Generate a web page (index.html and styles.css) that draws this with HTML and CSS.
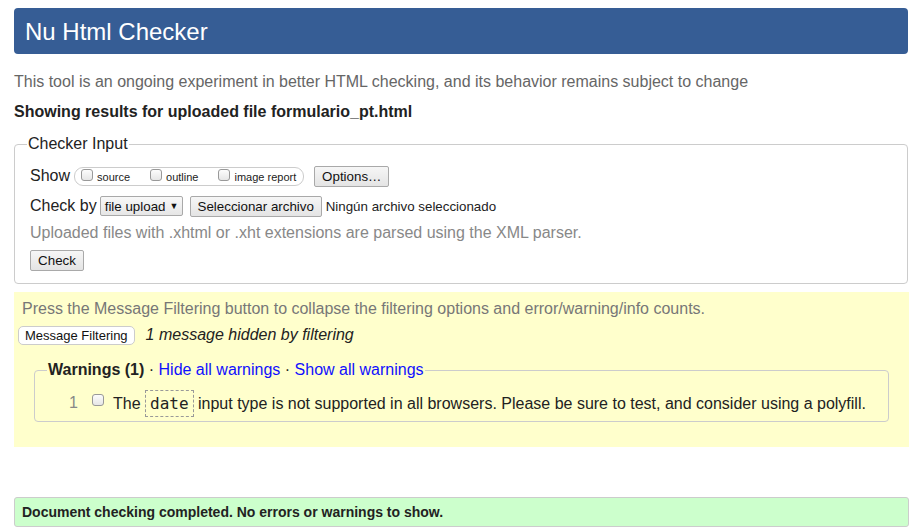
FILE: index.html
```html
<!DOCTYPE html>
<html lang="en">
<head>
<meta charset="utf-8">
<title>Nu Html Checker</title>
<link rel="stylesheet" href="styles.css">
</head>
<body>
<h1 class="title">Nu Html Checker</h1>
<p class="intro">This tool is an ongoing experiment in better HTML checking, and its behavior remains subject to change</p>
<p class="showing">Showing results for uploaded file formulario_pt.html</p>

<fieldset class="input-box">
  <legend>Checker Input</legend>
  <div class="row row-show">
    <span class="lbl">Show</span>
    <span class="pill">
      <label class="opt"><span class="cb"></span>source</label>
      <label class="opt"><span class="cb"></span>outline</label>
      <label class="opt"><span class="cb"></span>image report</label>
    </span>
    <span class="btn btn-options">Options…</span>
  </div>
  <div class="row row-checkby">
    <span class="lbl">Check by</span>
    <span class="select">file upload <span class="arrow">▼</span></span>
    <span class="btn btn-file">Seleccionar archivo</span>
    <span class="nofile">Ningún archivo seleccionado</span>
  </div>
  <p class="hint">Uploaded files with .xhtml or .xht extensions are parsed using the XML parser.</p>
  <div class="row row-check">
    <span class="btn btn-check">Check</span>
  </div>
</fieldset>

<section class="filter">
  <p class="filter-note">Press the Message Filtering button to collapse the filtering options and error/warning/info counts.</p>
  <div class="filter-row">
    <span class="btn-filter">Message Filtering</span>
    <em class="hidden-note">1 message hidden by filtering</em>
  </div>
  <fieldset class="warnings">
    <legend><strong>Warnings (1)</strong> · <a href="#">Hide all warnings</a> · <a href="#">Show all warnings</a></legend>
    <div class="msg">
      <span class="num">1</span>
      <span class="cb cb-msg"></span>
      <span class="msg-text">The <code>date</code> input type is not supported in all browsers. Please be sure to test, and consider using a polyfill.</span>
    </div>
  </fieldset>
</section>

<p class="done">Document checking completed. No errors or warnings to show.</p>
</body>
</html>
```

FILE: styles.css
```css
html, body {
  margin: 0;
  padding: 0;
  background: #fff;
}
body {
  padding: 8px 15px 0 14px;
  font-family: "Liberation Sans", Arial, sans-serif;
  font-size: 16px;
  color: #222;
}
.title {
  margin: 0;
  height: 46px;
  box-sizing: border-box;
  padding: 9px 11px 0;
  background: #365d95;
  color: #fff;
  border-radius: 4px;
  font-size: 24px;
  font-weight: normal;
  line-height: 30px;
}
.intro {
  margin: 18px 0 0;
  color: #666;
  line-height: 20px;
}
.showing {
  margin: 10px 0 0;
  font-weight: bold;
  line-height: 20px;
}
.input-box {
  margin: 12px 0 0;
  padding: 0 15px 12px;
  border: 1px solid #ccc;
  border-radius: 4px;
  min-width: 0;
}
.input-box legend {
  padding: 0 1px;
  margin-left: -3px;
  line-height: 20px;
}
.row {
  display: flex;
  align-items: center;
  white-space: nowrap;
}
.row-show {
  margin-top: 11px;
  height: 22px;
}
.lbl {
  line-height: 20px;
}
.pill {
  display: flex;
  align-items: center;
  margin-left: 4px;
  height: 19px;
  box-sizing: border-box;
  border: 1px solid #ccc;
  border-radius: 9px;
  padding: 0 7px 0 6px;
  font-size: 11px;
}
.opt {
  display: flex;
  align-items: center;
  margin-right: 20px;
  position: relative;
  top: 1px;
}
.opt:last-child { margin-right: 0; }
.cb {
  display: inline-block;
  flex-shrink: 0;
  width: 12px;
  height: 12px;
  box-sizing: border-box;
  border: 1px solid #999;
  border-radius: 3px;
  background: linear-gradient(#fcfcfc, #e6e6e6);
  margin-right: 4px;
  position: relative;
  top: -2px;
}
.btn {
  display: inline-flex;
  align-items: center;
  flex-shrink: 0;
  box-sizing: border-box;
  font-size: 13.333px;
  color: #111;
  background: linear-gradient(#f6f6f6, #e4e4e4);
  border: 1px solid #a9a9a9;
  border-radius: 2px;
  padding: 0 6px;
}
.btn-options {
  margin-left: 10px;
  height: 21px;
  width: 75px;
  justify-content: center;
}
.row-checkby {
  margin-top: 8px;
  height: 22px;
}
.select {
  display: inline-flex;
  align-items: center;
  flex-shrink: 0;
  box-sizing: border-box;
  height: 20px;
  width: 83px;
  margin-left: 3px;
  padding: 0 0 0 4px;
  border: 1px solid #a9a9a9;
  border-radius: 2px;
  background: linear-gradient(#f8f8f8, #e6e6e6);
  font-size: 13.333px;
  color: #111;
  white-space: nowrap;
}
.arrow {
  font-size: 9px;
  margin-left: 4px;
}
.btn-file {
  margin-left: 7px;
  height: 21px;
  width: 132px;
  justify-content: center;
}
.nofile {
  font-size: 13.333px;
  margin-left: 4px;
}
.hint {
  margin: 6px 0 0;
  color: #888;
  line-height: 20px;
}
.row-check {
  margin-top: 7px;
}
.btn-check {
  height: 21px;
  width: 54px;
  justify-content: center;
}
.filter {
  margin-top: 8px;
  background: #ffffcc;
  padding: 8px 0 25px 4px;
  margin-right: -1px;
}
.filter-note {
  margin: 0 0 0 4px;
  color: #777;
  line-height: 18px;
}
.filter-row {
  display: flex;
  align-items: center;
  margin-top: 7px;
}
.btn-filter {
  display: inline-flex;
  align-items: center;
  height: 19px;
  box-sizing: border-box;
  padding: 0 6px;
  background: #fff;
  border: 1px solid #ccc;
  border-radius: 5px;
  font-size: 13px;
  color: #111;
}
.hidden-note {
  margin-left: 11px;
  line-height: 20px;
}
.warnings {
  margin: 15px 20px 0 16px;
  padding: 0 0 5px;
  border: 1px solid #ccc;
  border-radius: 4px;
  min-width: 0;
}
.warnings legend {
  padding: 0 1px;
  margin-left: 12px;
  line-height: 20px;
}
.warnings a {
  color: #1010ff;
  text-decoration: none;
}
.msg {
  display: flex;
  align-items: center;
  height: 26px;
  margin-top: 10px;
}
.num {
  color: #888;
  margin-left: 34px;
  width: 23px;
}
.cb-msg {
  margin-right: 9px;
  top: -3px;
}
code {
  font-family: "DejaVu Sans Mono", "Liberation Mono", monospace;
  font-size: 16px;
  border: 1px dashed #999;
  padding: 3px 4px;
}
.done {
  margin: 50px 0 0;
  height: 30px;
  box-sizing: border-box;
  margin-right: -1px;
  padding: 0 7px;
  background: #ccffcc;
  border: 1px solid #ccc;
  border-radius: 3px;
  font-size: 14px;
  font-weight: bold;
  line-height: 28px;
}
```
